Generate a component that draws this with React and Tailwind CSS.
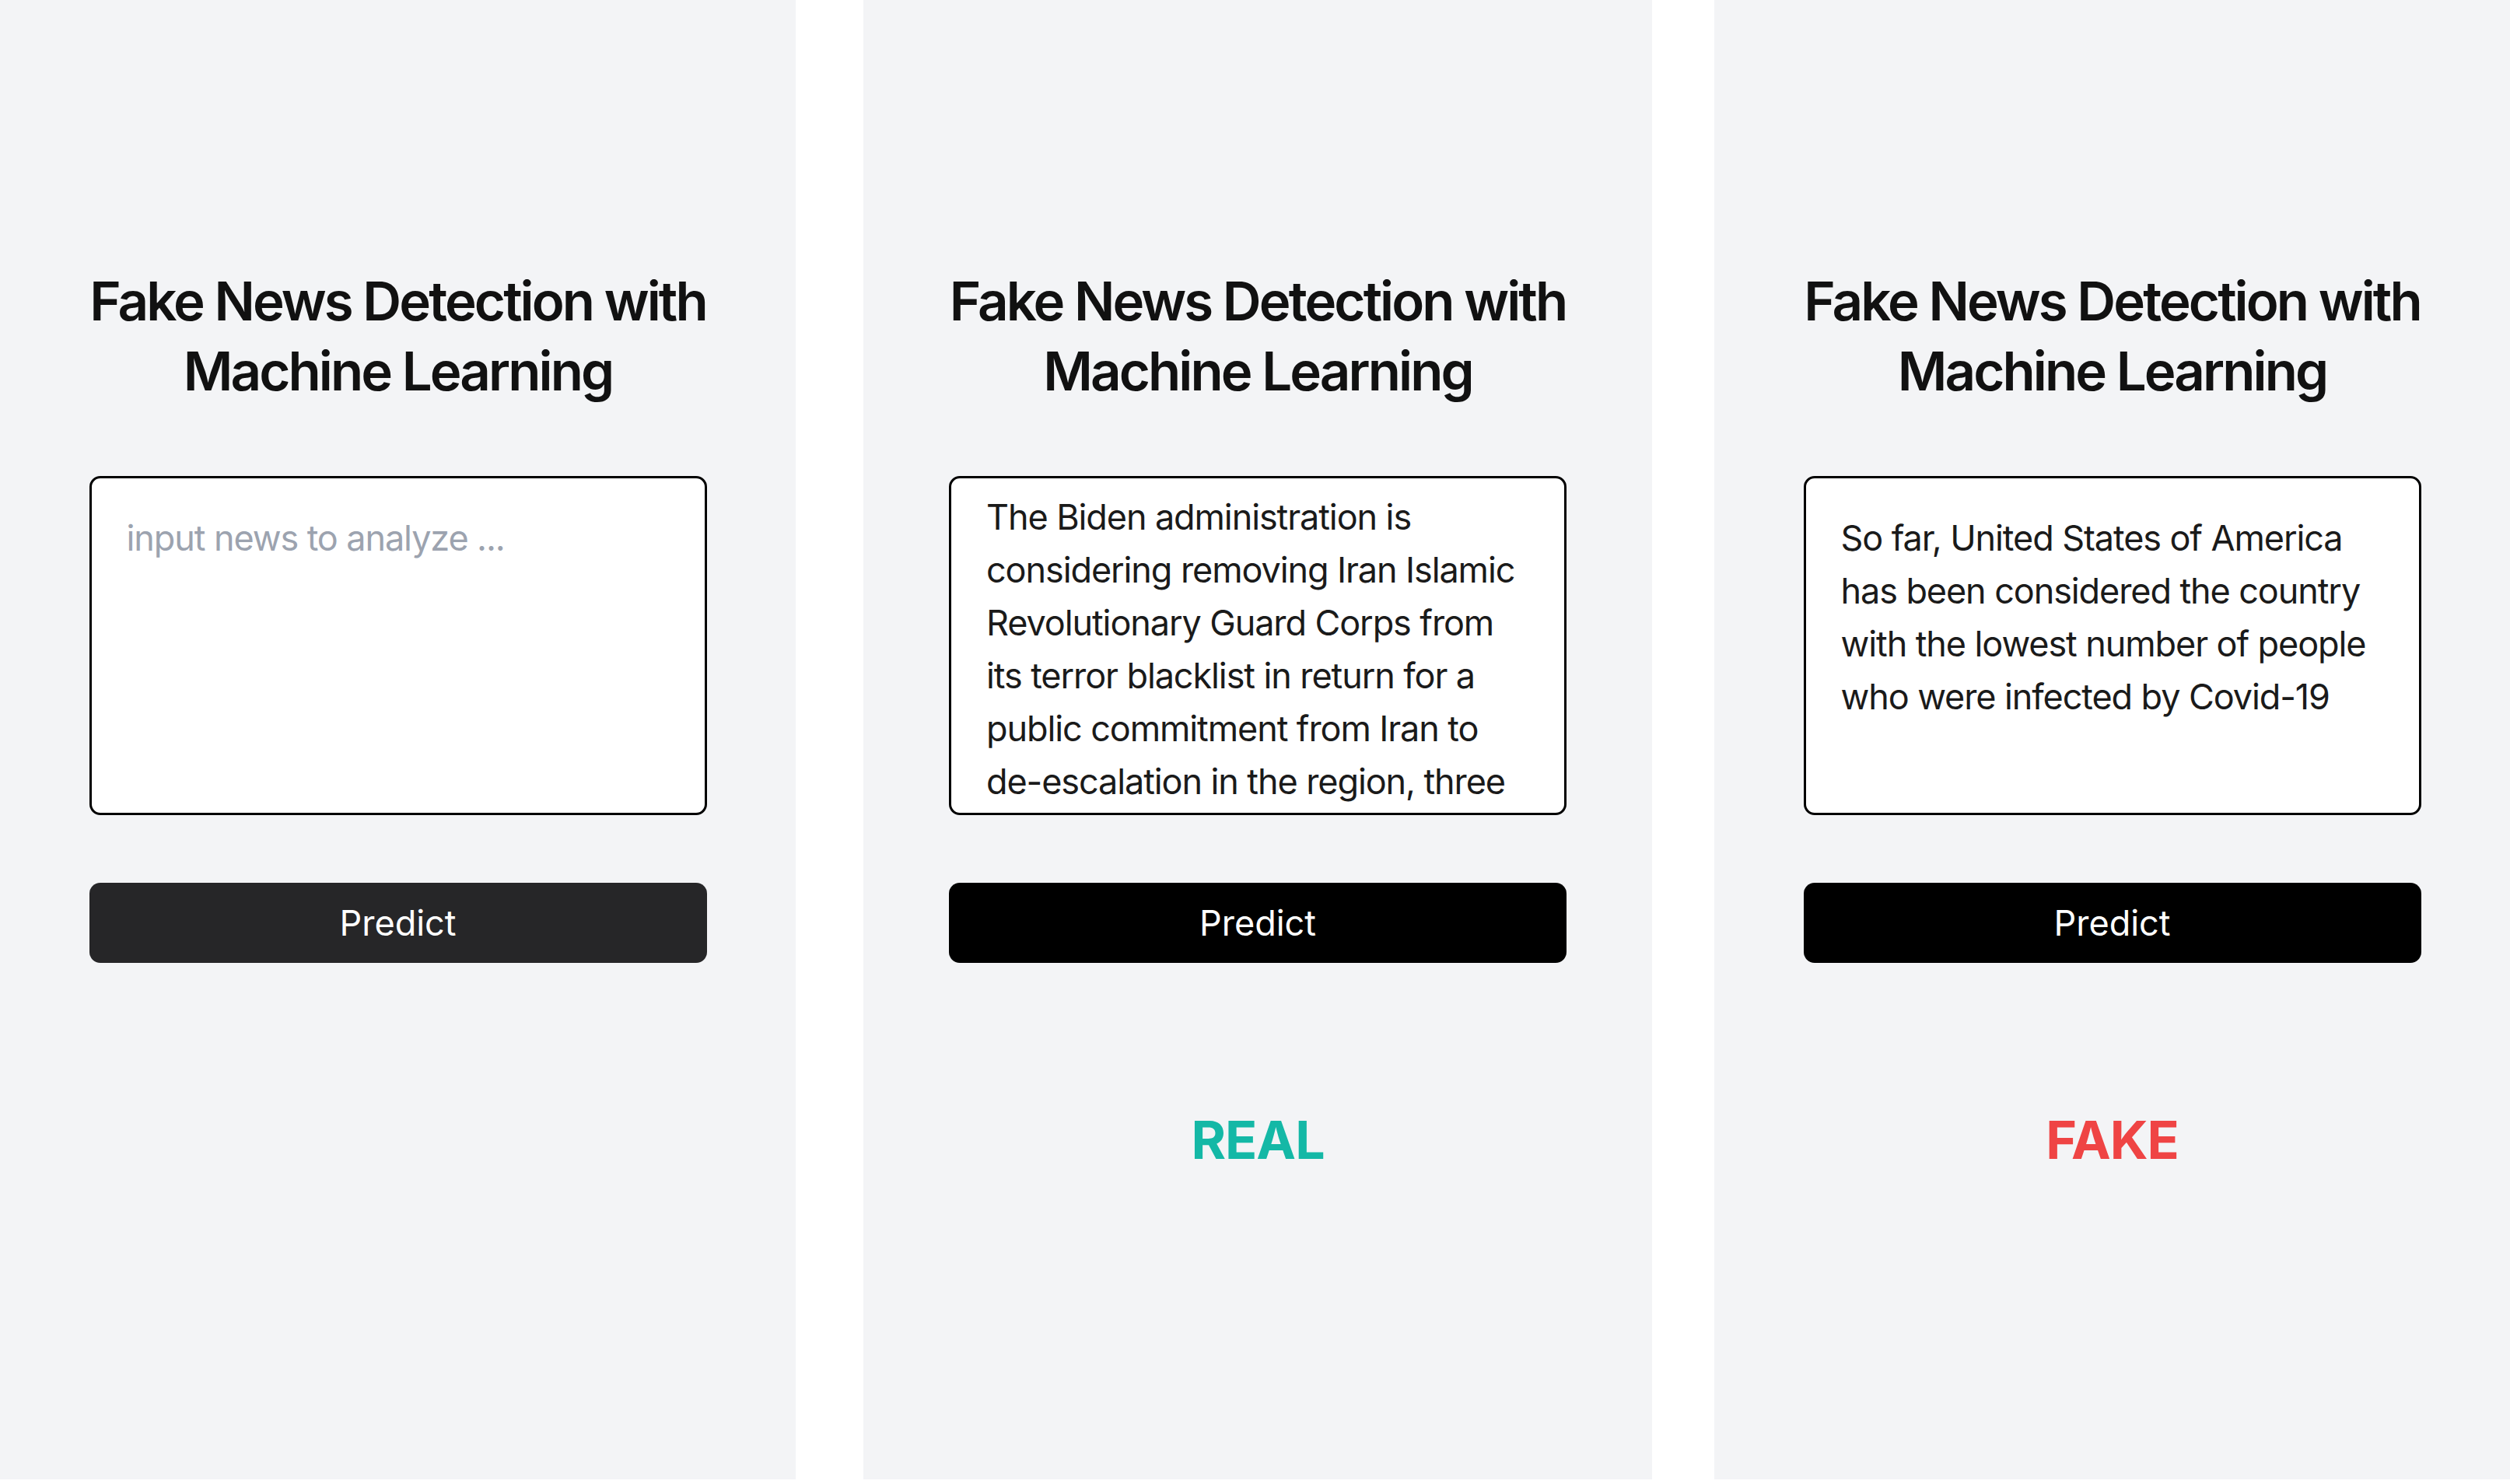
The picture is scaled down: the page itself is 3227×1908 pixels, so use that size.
import React from "react";

const panels = [
  {
    width: "w-[1023px]",
    gap: "",
    button: "bg-[#262628]",
    lines: null,
    scroll: false,
    result: null,
  },
  {
    width: "w-[1014px]",
    gap: "ml-[87px]",
    button: "bg-black",
    lines: [
      "The Biden administration is",
      "considering removing Iran Islamic",
      "Revolutionary Guard Corps from",
      "its terror blacklist in return for a",
      "public commitment from Iran to",
      "de-escalation in the region, three",
    ],
    scroll: true,
    result: { label: "REAL", color: "text-[#14b8a6]" },
  },
  {
    width: "w-[1023px]",
    gap: "ml-[80px]",
    button: "bg-black",
    lines: [
      "So far, United States of America",
      "has been considered the country",
      "with the lowest number of people",
      "who were infected by Covid-19",
    ],
    scroll: false,
    result: { label: "FAKE", color: "text-[#ef4444]" },
  },
];

const Panel = ({ panel }) => {
  return (
    <div className={`${panel.width} ${panel.gap} h-[1902px] shrink-0 bg-[#f3f4f6] flex flex-col items-center pt-[342px]`}>
      {/* Titre */}
      <h1 className="text-[69px] leading-[90px] font-semibold text-[#111111] text-center tracking-[-2.9px]">
        Fake News Detection with
        <br />
        Machine Learning
      </h1>

      {/* Zone de texte */}
      <div className="mt-[90px] w-[794px] h-[436px] bg-white border-[3px] border-black rounded-[14px] overflow-hidden">
        <div className={`px-[45px] ${panel.scroll ? "pt-[16px]" : "pt-[43px]"} text-[45px] leading-[68px] tracking-[-1.1px]`}>
          {panel.lines ? (
            panel.lines.map((line, i) => (
              <div key={i} className="whitespace-nowrap text-[#1a1a1a]">
                {line}
              </div>
            ))
          ) : (
            <div className="whitespace-nowrap text-[#9ca3af]">input news to analyze ...</div>
          )}
        </div>
      </div>

      {/* Bouton */}
      <button className={`mt-[87px] w-[794px] h-[103px] ${panel.button} rounded-[14px] text-white text-[45px] leading-[68px]`}>
        Predict
      </button>

      {/* Résultat */}
      {panel.result && (
        <div className={`mt-[182px] text-[68px] leading-[90px] font-bold tracking-[-1px] ${panel.result.color}`}>
          {panel.result.label}
        </div>
      )}
    </div>
  );
};

const App = () => {
  return (
    <div className="w-[3227px] h-[1908px] bg-white flex font-['Inter',sans-serif]">
      {panels.map((panel, i) => (
        <Panel key={i} panel={panel} />
      ))}
    </div>
  );
};

export default App;
